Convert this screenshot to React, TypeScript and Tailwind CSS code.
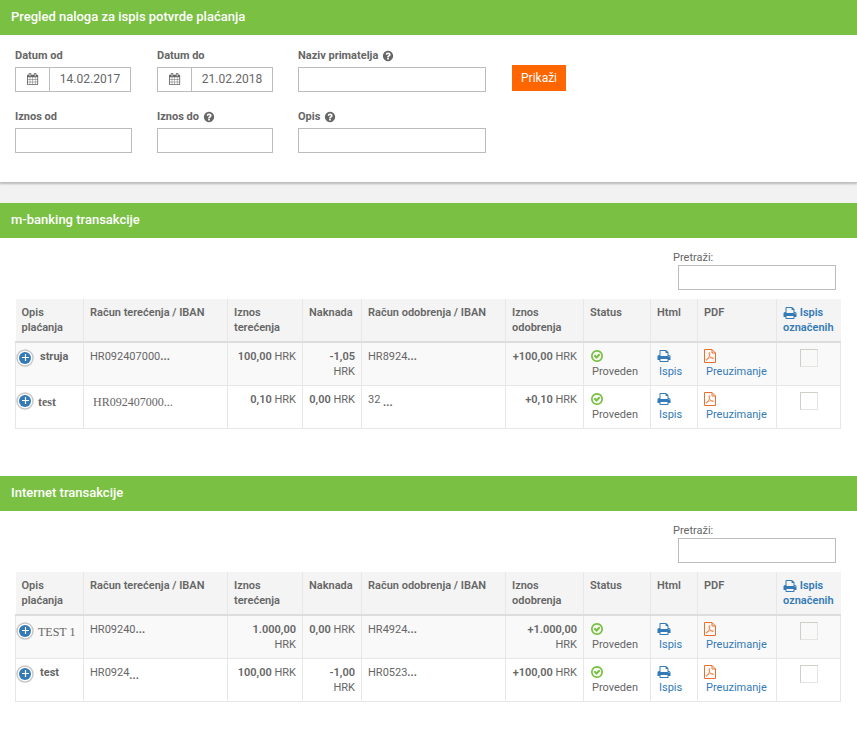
import type { ReactNode } from 'react';

interface IconProps {
    className?: string;
}

interface Transaction {
    name: ReactNode;
    from: ReactNode;
    debit: string;
    fee: string;
    to: ReactNode;
    credit: string;
}

const ICONS = {
    calendar:
        'M128 1664h288v-288h-288v288zm352 0h320v-288h-320v288zm-352-352h288v-320h-288v320zm352 0h320v-320h-320v320zm-352-384h288v-288h-288v288zm736 736h320v-288h-320v288zm-384-736h320v-288h-320v288zm768 736h288v-288h-288v288zm-384-352h320v-320h-320v320zm-352-864v-288q0-13-9.5-22.5t-22.5-9.5h-64q-13 0-22.5 9.5t-9.5 22.5v288q0 13 9.5 22.5t22.5 9.5h64q13 0 22.5-9.5t9.5-22.5zm736 864h288v-320h-288v320zm-384-384h320v-288h-320v288zm384 0h288v-288h-288v288zm32-480v-288q0-13-9.5-22.5t-22.5-9.5h-64q-13 0-22.5 9.5t-9.5 22.5v288q0 13 9.5 22.5t22.5 9.5h64q13 0 22.5-9.5t9.5-22.5zm384-64v1280q0 52-38 90t-90 38h-1408q-52 0-90-38t-38-90v-1280q0-52 38-90t90-38h128v-96q0-66 47-113t113-47h64q66 0 113 47t47 113v96h384v-96q0-66 47-113t113-47h64q66 0 113 47t47 113v96h128q52 0 90 38t38 90z',
    print: 'M448 1536h896v-256h-896v256zm0-640h896v-384h-160q-40 0-68-28t-28-68v-160h-640v640zm1152 64q0-26-19-45t-45-19-45 19-19 45 19 45 45 19 45-19 19-45zm128 0v416q0 13-9.5 22.5t-22.5 9.5h-224v160q0 40-28 68t-68 28h-960q-40 0-68-28t-28-68v-160h-224q-13 0-22.5-9.5t-9.5-22.5v-416q0-79 56.5-135.5t135.5-56.5h64v-544q0-40 28-68t68-28h672q40 0 88 20t76 48l152 152q28 28 48 76t20 88v256h64q79 0 135.5 56.5t56.5 135.5z',
    check: 'M1299 813l-422 422q-19 19-45 19t-45-19l-294-294q-19-19-19-45t19-45l102-102q19-19 45-19t45 19l147 147 275-275q19-19 45-19t45 19l102 102q19 19 19 45t-19 45zm141 83q0-148-73-273t-198-198-273-73-273 73-198 198-73 273 73 273 198 198 273 73 273-73 198-198 73-273zm224 0q0 209-103 385.5t-279.5 279.5-385.5 103-385.5-103-279.5-279.5-103-385.5 103-385.5 279.5-279.5 385.5-103 385.5 103 279.5 279.5 103 385.5z',
    question:
        'M1024 1376v-192q0-14-9-23t-23-9h-192q-14 0-23 9t-9 23v192q0 14 9 23t23 9h192q14 0 23-9t9-23zm256-672q0-88-55.5-163t-138.5-116-170-41q-243 0-371 213-15 24 8 42l132 100q7 6 19 6 16 0 25-12 53-68 86-92 34-24 86-24 48 0 85.5 26t37.5 59q0 38-20 61t-68 45q-63 28-115.5 86.5t-52.5 125.5v36q0 14 9 23t23 9h192q14 0 23-9t9-23q0-19 21.5-49.5t54.5-49.5q32-18 49-28.5t46-35 44.5-48 28-60.5 12.5-81zm384 192q0 209-103 385.5t-279.5 279.5-385.5 103-385.5-103-279.5-279.5-103-385.5 103-385.5 279.5-279.5 385.5-103 385.5 103 279.5 279.5 103 385.5z',
};

function Icon({ name, className = '' }: IconProps & { name: keyof typeof ICONS }) {
    return (
        <svg viewBox="0 0 1792 1792" fill="currentColor" className={className} aria-hidden="true">
            <path d={ICONS[name]} />
        </svg>
    );
}

function PdfIcon({ className = '' }: IconProps) {
    return (
        <svg viewBox="0 0 12 14" fill="none" stroke="currentColor" className={className} aria-hidden="true">
            <path d="M.5.5H8L11.5 4v9.500H.5z" />
            <path d="M8 .5V4h3.500" />
            <path
                strokeWidth="0.7"
                d="M5.300 3.400c.8 0 .5 2.200-.2 3.900-.8 1.900-1.900 4-2.700 4-.9-.3.400-1.800 2.400-2.300 2-.5 4.600-.5 4.700.2.100.8-2 .2-3.200-1.200-1.100-1.300-1.700-4.600-1-4.600z"
            />
        </svg>
    );
}

function PlusIcon({ className = '' }: IconProps) {
    return (
        <svg viewBox="0 0 18 18" className={className} aria-hidden="true">
            <circle cx="9" cy="9" r="8" fill="#fff" stroke="#c8c8c8" strokeWidth="1.500" />
            <circle cx="9" cy="9" r="6" fill="#337ab7" />
            <path d="M9.500 5v7M6 8.500h7" stroke="#fff" strokeWidth="1.200" />
        </svg>
    );
}

function PanelTitle({ children }: { children: ReactNode }) {
    return (
        <h2 className="h-[35px] bg-[#7ac043] px-[11px] text-[13px] leading-[34px] font-medium text-white">
            {children}
        </h2>
    );
}

function Field({ id, label, help = false, children }: { id: string; label: string; help?: boolean; children?: ReactNode }) {
    return (
        <div>
            <label htmlFor={id} className="mb-0.5 flex h-[18px] items-center gap-1 text-[11px] font-bold">
                {label}
                {help && <Icon name="question" className="size-3" />}
            </label>
            {children ?? <input id={id} type="text" className="block h-[25px] w-full border border-[#bbbcc0] bg-white px-2 text-[12px]" />}
        </div>
    );
}

function DateField({ id, label, value }: { id: string; label: string; value: string }) {
    return (
        <Field id={id} label={label}>
            <div className="flex h-[25px] w-[116px] border border-[#bbbcc0] bg-white">
                <button type="button" aria-label={label} className="flex w-[34px] shrink-0 items-center justify-center border-r border-[#bbbcc0] pb-0.5 pl-px">
                    <Icon name="calendar" className="size-3" />
                </button>
                <input id={id} type="text" defaultValue={value} className="w-full min-w-0 pb-0.5 text-center text-[12px]" />
            </div>
        </Field>
    );
}

function Amount({ value }: { value: string }) {
    return (
        <td className="border border-[#e7e7e7] px-1.5 py-1.5 text-right">
            <b className="font-semibold">{value}</b> HRK
        </td>
    );
}

function TransactionTable({ id, rows }: { id: string; rows: Transaction[] }) {
    const th = 'border-x border-b-2 border-x-[#e7e7e7] border-b-[#dddddd] px-1.5 pt-[6px] pb-[5px] text-left font-semibold first:border-l-0 last:border-r-0';
    const td = 'border border-[#e7e7e7] px-1.5 py-1.5';

    return (
        <div className="pr-[17px] pl-[15px]">
            <div className="flex flex-col items-end pt-3 pr-1 pb-[9px]">
                <div className="w-[163px]">
                    <label htmlFor={id} className="block h-[15px] text-[11px] leading-[15px]">
                        Pretraži:
                    </label>
                    <input id={id} type="search" className="ml-[5px] block h-[25px] w-[158px] border border-[#bbbcc0] px-2" />
                </div>
            </div>
            <table className="w-full table-fixed border-collapse text-[11px] leading-[15px]">
                <colgroup>
                    <col className="w-[68px]" />
                    <col className="w-[144px]" />
                    <col className="w-[75px]" />
                    <col className="w-[59px]" />
                    <col className="w-[144px]" />
                    <col className="w-[78px]" />
                    <col className="w-[67px]" />
                    <col className="w-[47px]" />
                    <col className="w-[79px]" />
                    <col className="w-[64px]" />
                </colgroup>
                <thead className="bg-[#f4f4f4]">
                    <tr className="h-[43px] align-top">
                        <th className={th}>Opis plaćanja</th>
                        <th className={th}>Račun terećenja / IBAN</th>
                        <th className={th}>Iznos terećenja</th>
                        <th className={th}>Naknada</th>
                        <th className={th}>Račun odobrenja / IBAN</th>
                        <th className={th}>Iznos odobrenja</th>
                        <th className={th}>Status</th>
                        <th className={th}>Html</th>
                        <th className={th}>PDF</th>
                        <th className={th}>
                            <a href="#" className="text-[#337ab7]">
                                <Icon name="print" className="inline size-[14px]" /> Ispis označenih
                            </a>
                        </th>
                    </tr>
                </thead>
                <tbody>
                    {rows.map((row, i) => (
                        <tr key={i} className="h-[43px] align-top odd:bg-[#f9f9f9]">
                            <td className="border border-[#e7e7e7] py-1.5">
                                <div className="flex items-start">
                                    <button type="button" aria-label="Detalji" className="shrink-0">
                                        <PlusIcon className="size-[18px]" />
                                    </button>
                                    {row.name}
                                </div>
                            </td>
                            <td className={td}>{row.from}</td>
                            <Amount value={row.debit} />
                            <Amount value={row.fee} />
                            <td className={td}>{row.to}</td>
                            <Amount value={row.credit} />
                            <td className={td}>
                                <Icon name="check" className="block size-[14px] text-[#7ac043]" />
                                <span className="mt-px ml-0.5 block">Proveden</span>
                            </td>
                            <td className={td}>
                                <a href="#" className="block text-[#337ab7]">
                                    <Icon name="print" className="block size-[14px]" />
                                    <span className="mt-px ml-0.5 block">Ispis</span>
                                </a>
                            </td>
                            <td className={td}>
                                <a href="#" className="block text-[#337ab7]">
                                    <PdfIcon className="block h-[14px] w-3 text-[#e8702a]" />
                                    <span className="mt-px ml-0.5 block">Preuzimanje</span>
                                </a>
                            </td>
                            <td className={td}>
                                <input
                                    type="checkbox"
                                    aria-label="Označi"
                                    className="mx-auto block size-[18px] appearance-none border border-t-[#cfcfc8] border-r-[#e4e4e0] border-b-[#e4e4e0] border-l-[#cfcfc8]"
                                />
                            </td>
                        </tr>
                    ))}
                </tbody>
            </table>
        </div>
    );
}

const Name = ({ children }: { children: ReactNode }) => <b className="ml-1.5">{children}</b>;

const SerifName = ({ children }: { children: ReactNode }) => (
    <span className="ml-1 pt-[3px] font-['Liberation_Serif',serif] text-[12px] whitespace-nowrap">{children}</span>
);

const mobileRows: Transaction[] = [
    { name: <Name>struja</Name>, from: <>HR092407000<b>...</b></>, debit: '100,00', fee: '-1,05', to: <>HR8924<b>...</b></>, credit: '+100,00' },
    {
        name: <SerifName><b>test</b></SerifName>,
        from: <span className="block pt-[3px] pl-[3px] font-['Liberation_Serif',serif] text-[12px]">HR092407000...</span>,
        debit: '0,10',
        fee: '0,00',
        to: <>32 <b className="align-sub">...</b></>,
        credit: '+0,10',
    },
];

const internetRows: Transaction[] = [
    { name: <SerifName>TEST 1</SerifName>, from: <>HR09240<b>...</b></>, debit: '1.000,00', fee: '0,00', to: <>HR4924<b>...</b></>, credit: '+1.000,00' },
    { name: <Name>test</Name>, from: <>HR0924<b className="align-sub">...</b></>, debit: '100,00', fee: '-1,00', to: <>HR0523<b>...</b></>, credit: '+100,00' },
];

export default function App() {
    return (
        <main className="min-h-screen bg-white font-[Roboto,'Liberation_Sans',sans-serif] text-[#666666]">
            <section className="relative border-b border-[#bfbfbf] shadow-[0_1px_2px_rgba(0,0,0,0.25)]">
                <PanelTitle>Pregled naloga za ispis potvrde plaćanja</PanelTitle>
                <form className="flex items-start gap-[26px] px-[15px] pt-3 pb-[29px]">
                    <div className="grid grid-cols-[117px_116px_188px] gap-x-[25px] gap-y-4">
                        <DateField id="date-from" label="Datum od" value="14.02.2017" />
                        <DateField id="date-to" label="Datum do" value="21.02.2018" />
                        <Field id="payee" label="Naziv primatelja" help />
                        <Field id="amount-from" label="Iznos od" />
                        <Field id="amount-to" label="Iznos do" help />
                        <Field id="description" label="Opis" help />
                    </div>
                    <button type="button" className="mt-[18px] h-[26px] bg-[#ff6600] px-[9px] text-[12px] text-white">
                        Prikaži
                    </button>
                </form>
            </section>
            <div className="h-5 bg-[#f2f2f2]" />
            <section className="pb-[47px]">
                <PanelTitle>m-banking transakcije</PanelTitle>
                <TransactionTable id="search-mobile" rows={mobileRows} />
            </section>
            <section className="pb-[47px]">
                <PanelTitle>Internet transakcije</PanelTitle>
                <TransactionTable id="search-internet" rows={internetRows} />
            </section>
        </main>
    );
}
